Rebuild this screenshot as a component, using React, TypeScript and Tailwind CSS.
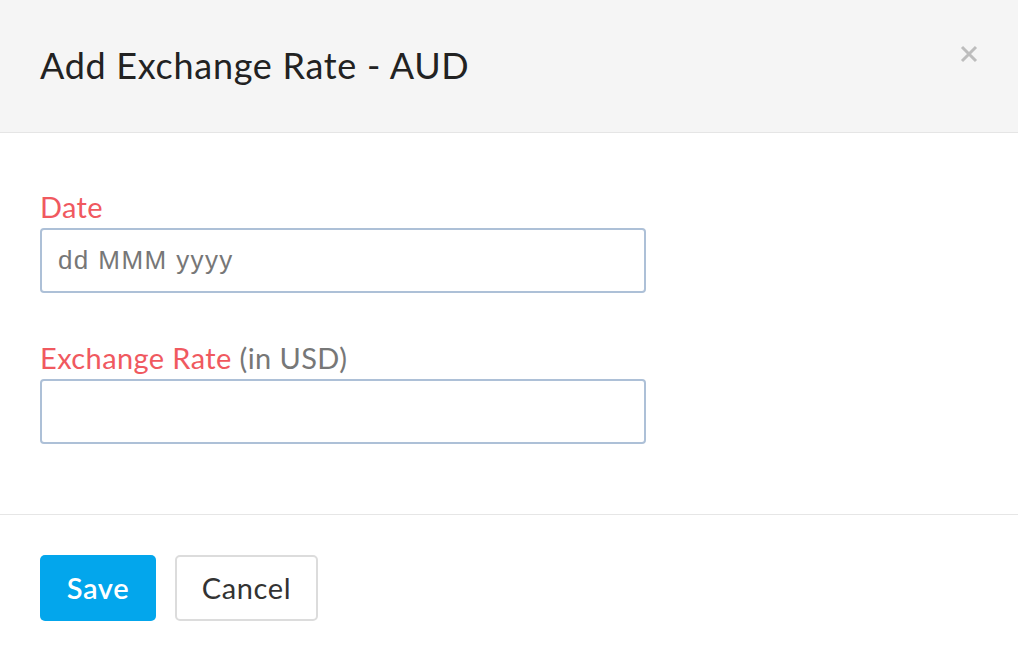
import React from 'react';

export default function App() {
  return (
    <div className="w-[1018px] h-[660px] bg-white flex flex-col font-['Lato',sans-serif]">
      <div className="h-[133px] shrink-0 bg-[#f5f5f5] border-b border-[#e5e5e5] flex items-center justify-between pl-10 pr-10">
        <h1 className="text-[36px] leading-[44px] text-[#222] font-normal tracking-[0.7px] pb-[2px]">Add Exchange Rate - AUD</h1>
        <button className="-mt-[25px]">
          <svg width="18" height="18" viewBox="0 0 18 18">
            <path d="M2 2 L16 16 M16 2 L2 16" stroke="#bdbdbd" strokeWidth="3" />
          </svg>
        </button>
      </div>

      <div className="h-[382px] shrink-0 border-b border-[#e6e6e6] px-10 pt-[55px] flex flex-col">
        <label className="text-[29px] text-[#f0595f] leading-[38px] tracking-[0.3px]">Date</label>
        <div className="mt-[2px] w-[606px] h-[65px] border-2 border-[#adc0d7] rounded-[4px] flex items-center px-[16px]">
          <span className="font-['Liberation_Sans',sans-serif] text-[26px] tracking-[1.4px] text-[#777]">dd MMM yyyy</span>
        </div>

        <label className="mt-[46px] text-[29px] text-[#f0595f] leading-[38px] tracking-[0.4px]">
          Exchange Rate <span className="text-[#777]">(in USD)</span>
        </label>
        <div className="mt-[2px] w-[606px] h-[65px] border-2 border-[#adc0d7] rounded-[4px]" />
      </div>

      <div className="px-10 pt-[40px] flex gap-[19px]">
        <button className="w-[116px] h-[66px] rounded-[5px] bg-[#03a6ec] text-white text-[29px] font-semibold tracking-[0.6px]">Save</button>
        <button className="w-[143px] h-[66px] rounded-[5px] border-2 border-[#dcdcdc] bg-white text-[#333] text-[29px] tracking-[0.6px]">Cancel</button>
      </div>
    </div>
  );
}
